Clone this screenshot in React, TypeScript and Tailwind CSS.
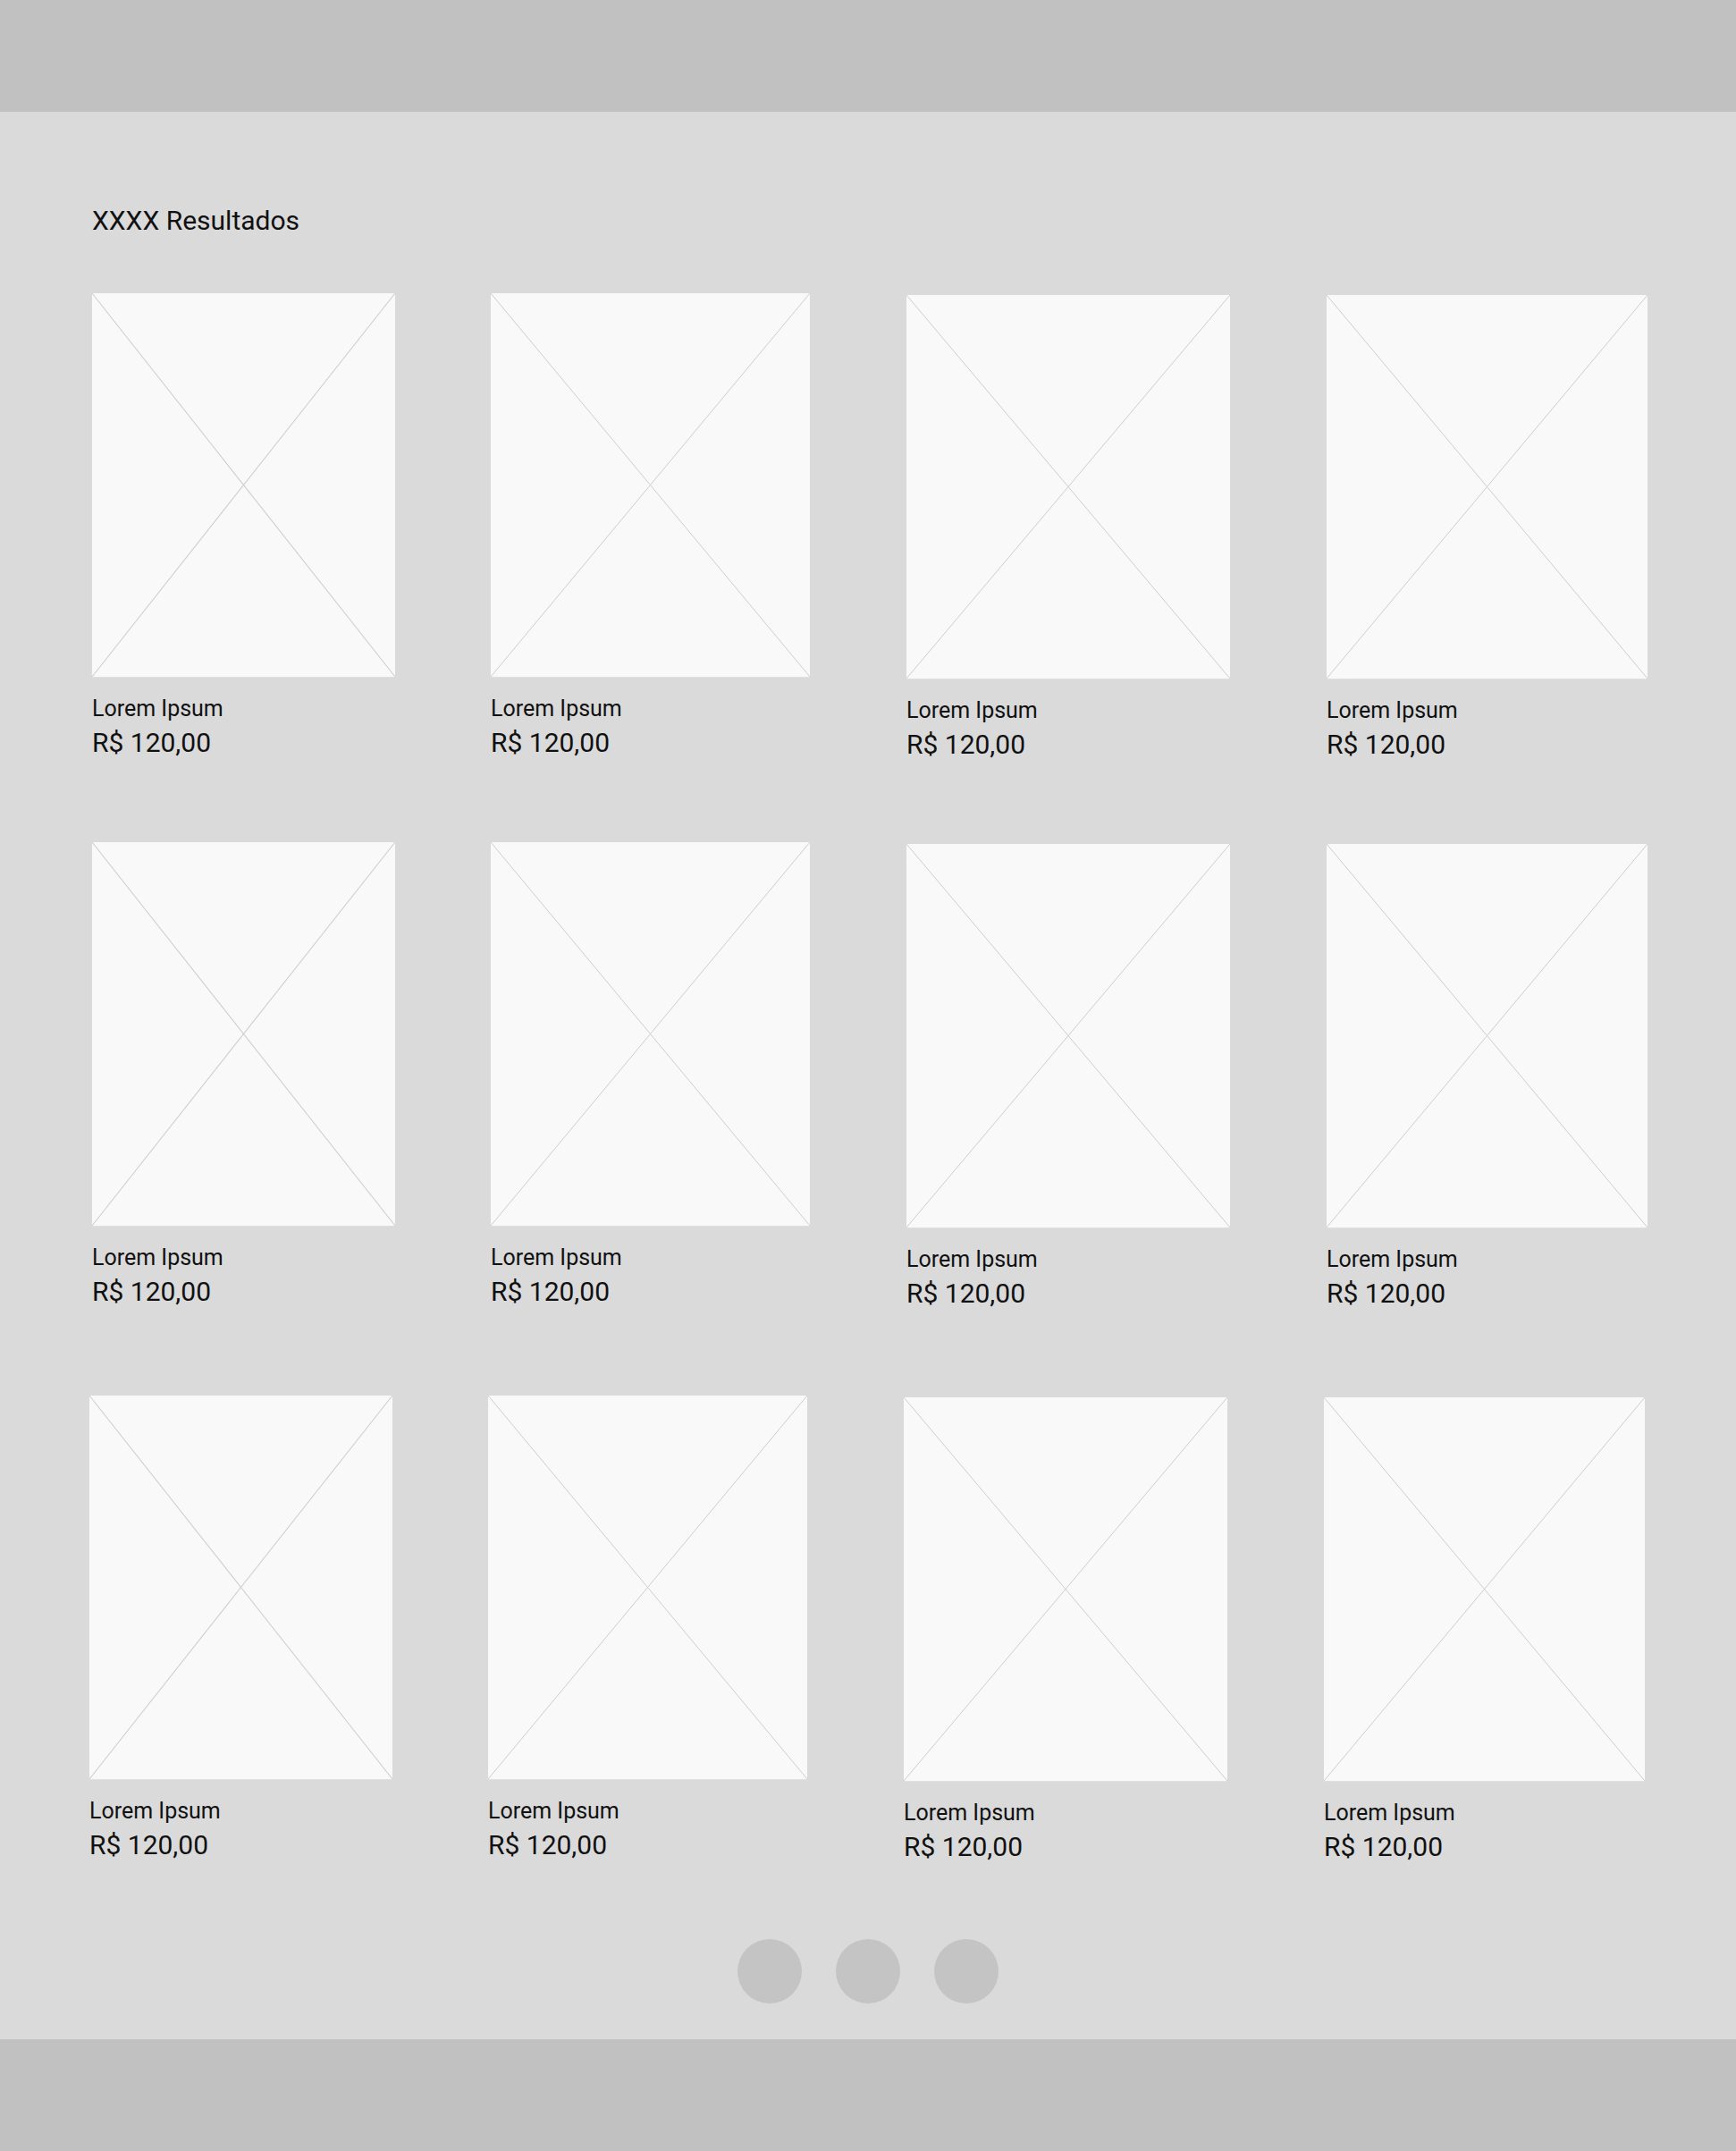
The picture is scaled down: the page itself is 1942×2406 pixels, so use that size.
const rows = [
  { offset: "ml-0", top: "mt-[64px]" },
  { offset: "ml-0", top: "mt-[92px]" },
  { offset: "-ml-[3px]", top: "mt-[97px]" },
];

const cols = [
  { width: "w-[339px]", drop: "mt-0", shift: "ml-0" },
  { width: "w-[357px]", drop: "mt-0", shift: "ml-0" },
  { width: "w-[362px]", drop: "mt-[2px]", shift: "ml-[1px]" },
  { width: "w-[359px]", drop: "mt-[2px]", shift: "ml-[1px]" },
];

function Placeholder() {
  return (
    <div className="relative h-[429px] w-full bg-[#f9f9f9] shadow-[0_1px_0_#e0e0e0]">
      <svg
        className="absolute inset-0 h-full w-full"
        viewBox="0 0 100 100"
        preserveAspectRatio="none"
      >
        <line x1="0" y1="0" x2="100" y2="100" stroke="#cdcdcd" strokeWidth="1" vectorEffect="non-scaling-stroke" />
        <line x1="100" y1="0" x2="0" y2="100" stroke="#cdcdcd" strokeWidth="1" vectorEffect="non-scaling-stroke" />
      </svg>
    </div>
  );
}

function ProductCard({ width, drop, shift }: { width: string; drop: string; shift: string }) {
  return (
    <div className={`flex shrink-0 flex-col ${width} ${drop} ${shift}`}>
      <Placeholder />
      <p className="mt-[22px] text-[25px] leading-[28px] text-[#111]">Lorem Ipsum</p>
      <p className="mt-[6px] text-[30px] leading-[35px] text-[#111]">R$ 120,00</p>
    </div>
  );
}

export default function App() {
  return (
    <div className="flex min-h-[2406px] w-[1942px] flex-col bg-[#dadada] font-['Roboto',sans-serif]">
      <header className="h-[125px] bg-[#c1c1c1]" />

      <main className="flex flex-1 flex-col pl-[103px] pt-[104px]">
        <h1 className="text-[30px] leading-[35px] font-normal text-[#111]">XXXX Resultados</h1>

        {rows.map((row, r) => (
          <div key={r} className={`flex items-start gap-[107px] ${row.offset} ${row.top}`}>
            {cols.map((col, c) => (
              <ProductCard key={c} width={col.width} drop={col.drop} shift={col.shift} />
            ))}
          </div>
        ))}

        <nav className="-ml-[103px] mt-[86px] flex justify-center gap-[38px]">
          {[1, 2, 3].map((n) => (
            <button key={n} aria-label={`Página ${n}`} className="h-[72px] w-[72px] rounded-full bg-[#c4c4c4]" />
          ))}
        </nav>
      </main>

      <footer className="h-[125px] bg-[#c1c1c1]" />
    </div>
  );
}
